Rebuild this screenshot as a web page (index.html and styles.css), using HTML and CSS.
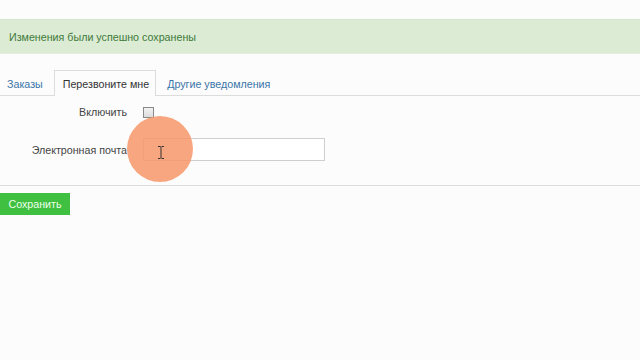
FILE: index.html
```html
<!DOCTYPE html>
<html lang="ru">
<head>
<meta charset="utf-8">
<link rel="stylesheet" href="styles.css">
</head>
<body>
<div class="alert">Изменения были успешно сохранены</div>
<div class="tabs">
  <a class="tab">Заказы</a>
  <a class="tab active">Перезвоните мне</a>
  <a class="tab">Другие уведомления</a>
</div>
<div class="form">
  <div class="row row-check">
    <label class="label">Включить</label>
    <span class="checkbox"></span>
  </div>
  <div class="row row-email">
    <label class="label">Электронная почта</label>
    <span class="input"></span>
  </div>
  <div class="click"></div>
  <svg class="ibeam" width="8" height="13" viewBox="0 0 8 13"><path d="M1 0.5h2.2l0.8 0.8 0.8-0.8H7M4 1.3v10.4M1 12.5h2.2l0.8-0.8 0.8 0.8H7" fill="none" stroke="#333" stroke-width="1"/></svg>
</div>
<div class="footer">
  <button class="btn">Сохранить</button>
</div>
</body>
</html>
```
FILE: styles.css
```css
html, body { margin: 0; padding: 0; }
body {
  background: #fcfcfc;
  font-family: "Liberation Sans", Arial, sans-serif;
  font-size: 10.7px;
  color: #444;
  width: 640px;
  height: 360px;
  overflow: hidden;
}
.alert {
  margin-top: 19px;
  height: 33px;
  line-height: 35px;
  padding-left: 9px;
  background: #dbebd4;
  border-top: 1px solid #d4e3cc;
  border-bottom: 1px solid #e3efdc;
  color: #3f7a3a;
}
.tabs {
  display: flex;
  margin-top: 16px;
  height: 25px;
  border-bottom: 1px solid #dcdcdc;
}
.tab {
  display: block;
  height: 25px;
  line-height: 26px;
  padding: 0 6px;
  color: #3a75a8;
  border: 1px solid transparent;
  border-bottom: none;
  box-sizing: border-box;
}
.tab.active {
  color: #333;
  background: #fcfcfc;
  border-color: #dcdcdc;
  height: 26px;
  margin-bottom: -1px;
  margin-left: 4px;
  margin-right: 4px;
  padding: 0 6px 0 8px;
}
.form {
  position: relative;
  height: 89px;
  border-bottom: 1px solid #dcdcdc;
}
.row {
  display: grid;
  grid-template-columns: 127px auto;
  column-gap: 16px;
  align-items: center;
}
.label { text-align: right; color: #444; }
.row-check { padding-top: 10px; height: 12px; }
.row-email { padding-top: 20px; }
.checkbox {
  display: block;
  width: 9px;
  height: 9px;
  border: 1px solid #8a8a8a;
  background: linear-gradient(#f2f2f2, #dcdcdc);
}
.input {
  display: block;
  width: 180px;
  height: 21px;
  border: 1px solid #cfcfcf;
  background: #fff;
}
.click {
  position: absolute;
  left: 127px;
  top: 20px;
  width: 66px;
  height: 66px;
  border-radius: 50%;
  background: rgba(247, 150, 105, 0.85);
}
.ibeam {
  position: absolute;
  left: 157px;
  top: 50px;
}
.footer { padding-top: 7px; }
.btn {
  display: block;
  width: 70px;
  height: 22px;
  padding: 0;
  border: none;
  background: #40c040;
  color: #eaffea;
  font-family: "Liberation Sans", Arial, sans-serif;
  font-size: 10.7px;
}
```
